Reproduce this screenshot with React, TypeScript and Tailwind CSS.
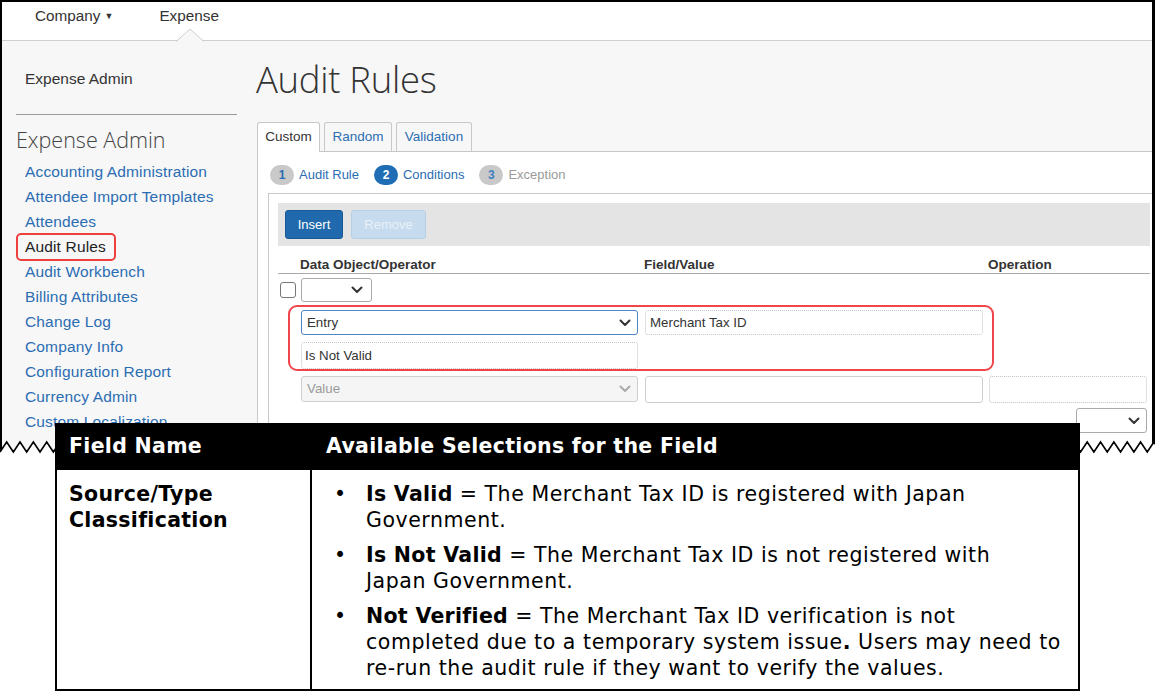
import React from 'react';

const sideLinks = [
  'Accounting Administration',
  'Attendee Import Templates',
  'Attendees',
  'Audit Rules',
  'Audit Workbench',
  'Billing Attributes',
  'Change Log',
  'Company Info',
  'Configuration Report',
  'Currency Admin',
  'Custom Localization',
];

function Chevron({ color = '#333' }: { color?: string }) {
  return (
    <svg width="12" height="8" viewBox="0 0 12 8" className="shrink-0">
      <path d="M1.5 1.5 L6 6 L10.5 1.5" fill="none" stroke={color} strokeWidth="2" strokeLinecap="round" strokeLinejoin="round" />
    </svg>
  );
}

function Zigzag() {
  // teeth along the torn bottom edge of the screenshot
  const pts: string[] = [];
  for (let i = 0; i <= 175; i++) {
    pts.push(`${(i * 6.67).toFixed(2)},${i % 2 ? 4 : 14}`);
  }
  const line = pts.join(' ');
  return (
    <svg className="absolute left-0 top-[438px]" width="1155" height="24" viewBox="0 0 1155 24">
      <polygon points={`0,14 ${line} 1155,24 0,24`} fill="#ffffff" />
      <polyline points={line} fill="none" stroke="#000" strokeWidth="1.6" />
    </svg>
  );
}

export default function App() {
  return (
    <div className="relative w-[1155px] h-[692px] bg-white overflow-hidden font-['Liberation_Sans',Arial,sans-serif]">
      {/* Screenshot area */}
      <div className="h-[458px] border-l-2 border-t-2 border-r-[3px] border-black bg-[#f7f7f7] overflow-hidden">
        {/* Top nav */}
        <div className="relative h-[39px] bg-white border-b border-[#cfcfcf] flex items-start text-[15.3px] text-[#333]">
          <div className="ml-[33px] mt-[3px] flex items-center gap-[4px]">
            Company
            <span className="text-[9px] mt-[1px]">▼</span>
          </div>
          <div className="ml-[46px] mt-[3px]">Expense</div>
          <svg className="absolute left-[174px] top-[26px]" width="28" height="14" viewBox="0 0 28 14">
            <polygon points="0,14 14,1 28,14" fill="#f7f7f7" />
            <polyline points="0,13.5 14,1 28,13.5" fill="none" stroke="#cfcfcf" strokeWidth="1" />
          </svg>
        </div>

        <div className="flex">
          {/* Sidebar */}
          <div className="w-[254px] shrink-0">
            <div className="ml-[23px] mt-[29px] text-[15.5px] text-[#333] leading-[18px]">Expense Admin</div>
            <div className="ml-[14px] mt-[26px] w-[221px] border-t border-[#9a9a9a]" />
            <div className="ml-[14px] mt-[12px] text-[21.5px] font-light text-[#444] leading-[26px] font-['Open_Sans',sans-serif]">Expense Admin</div>
            <div className="mt-[6px] text-[15.5px] leading-[25px] tracking-[0.15px]">
              {sideLinks.map((l) =>
                l === 'Audit Rules' ? (
                  <div key={l} className="ml-[14px] w-[100px] h-[28px] -my-[1.5px] pl-[7px] border-2 border-[#ef3f3f] rounded-[5px] text-[#222] leading-[24px]">
                    {l}
                  </div>
                ) : (
                  <div key={l} className="ml-[23px] text-[#2b6db3]">{l}</div>
                )
              )}
            </div>
          </div>

          {/* Main */}
          <div className="flex-1 min-w-0">
            <div className="mt-[18px] text-[36.5px] font-light text-[#333] leading-[40px] font-['Open_Sans',sans-serif] tracking-[-0.3px]">
              Audit Rules
            </div>
            {/* Tabs */}
            <div className="mt-[23px] ml-[1px] flex gap-[4px] text-[13.5px] h-[29px] items-end">
              <div className="w-[63px] h-[30px] bg-white border border-b-0 border-[#c8c8c8] rounded-t-[3px] flex items-center justify-center text-[#333] relative top-[1px] z-10">Custom</div>
              <div className="w-[68px] h-[29px] bg-[#f7f7f7] border border-b-0 border-[#c8c8c8] rounded-t-[3px] flex items-center justify-center text-[#2b6db3]">Random</div>
              <div className="w-[76px] h-[29px] bg-[#f7f7f7] border border-b-0 border-[#c8c8c8] rounded-t-[3px] flex items-center justify-center text-[#2b6db3]">Validation</div>
            </div>
            {/* Tab panel */}
            <div className="ml-[1px] bg-white border-l border-t border-[#c8c8c8] h-[400px]">
              {/* Steps */}
              <div className="flex items-center h-[41px] pl-[12px] text-[13px] pt-[5px]">
                <div className="w-[24px] h-[20px] rounded-full bg-[#c9c9c9] flex items-center justify-center text-[#2b6db3] font-bold text-[12px]">1</div>
                <div className="ml-[5px] text-[#2b6db3]">Audit Rule</div>
                <div className="ml-[15px] w-[24px] h-[20px] rounded-full bg-[#1f6db5] flex items-center justify-center text-white font-bold text-[12px]">2</div>
                <div className="ml-[5px] text-[#2b6db3]">Conditions</div>
                <div className="ml-[15px] w-[24px] h-[20px] rounded-full bg-[#c9c9c9] flex items-center justify-center text-[#3f7fc0] font-bold text-[12px]">3</div>
                <div className="ml-[5px] text-[#9a9a9a]">Exception</div>
              </div>
              {/* Conditions box */}
              <div className="ml-[10px] w-[900px] border-l border-t border-[#c8c8c8] pl-[9px] pt-[9px] h-[300px]">
                <div className="w-[872px] h-[43px] bg-[#e3e4e3] flex items-center pl-[7px] gap-[8px] text-[13px]">
                  <div className="w-[58px] h-[29px] rounded-[3px] bg-[#1f69ac] border border-[#185a95] text-white flex items-center justify-center">Insert</div>
                  <div className="w-[75px] h-[29px] rounded-[3px] bg-[#c6dbee] border border-[#b5cfe7] text-[#e9f1f9] flex items-center justify-center">Remove</div>
                </div>
                <div className="w-[872px] h-[28px] border-b border-[#a9a9a9] flex items-end text-[13.5px] leading-[16px] font-bold text-[#333]">
                  <div className="ml-[22px] w-[344px]">Data Object/Operator</div>
                  <div className="w-[344px]">Field/Value</div>
                  <div>Operation</div>
                </div>
                {/* Row: empty select */}
                <div className="flex items-center mt-[4px]">
                  <div className="ml-[2px] w-[16px] h-[16px] border border-[#777] rounded-[3px] bg-white" />
                  <div className="ml-[5px] w-[71px] h-[24px] border border-[#aaa] rounded-[3px] bg-white flex items-center justify-end pr-[8px]">
                    <Chevron />
                  </div>
                </div>
                {/* Highlighted rows */}
                <div className="ml-[10px] mt-[3px] w-[706px] h-[66px] border-2 border-[#f0454a] rounded-[9px] pl-[11px] pt-[3px] text-[13.3px] text-[#333]">
                  <div className="flex">
                    <div className="w-[337px] h-[25px] border-[1.5px] border-[#4d86c4] rounded-[3px] bg-white flex items-center justify-between pl-[5px] pr-[6px]">
                      Entry
                      <Chevron />
                    </div>
                    <div className="ml-[7px] w-[338px] h-[25px] border border-dotted border-[#c4c4c4] rounded-[3px] bg-white flex items-center pl-[4px]">
                      Merchant Tax ID
                    </div>
                  </div>
                  <div className="mt-[7px] w-[337px] h-[27px] border border-dotted border-[#c4c4c4] rounded-[3px] bg-white flex items-center pl-[3px]">
                    Is Not Valid
                  </div>
                </div>
                {/* Value row */}
                <div className="ml-[23px] mt-[5px] flex text-[13.3px]">
                  <div className="w-[337px] h-[26px] border border-[#cfcfcf] rounded-[3px] bg-[#f5f5f5] flex items-center justify-between pl-[5px] pr-[6px] text-[#9a9a9a]">
                    Value
                    <Chevron color="#aaa" />
                  </div>
                  <div className="ml-[7px] w-[338px] h-[27px] border border-[#cfcfcf] rounded-[3px] bg-white" />
                  <div className="ml-[6px] w-[158px] h-[27px] border border-dotted border-[#c4c4c4] rounded-[3px] bg-white" />
                </div>
                <div className="ml-[798px] mt-[5px] w-[71px] h-[25px] border border-[#aaa] rounded-[3px] bg-white flex items-center justify-end pr-[6px]">
                  <Chevron />
                </div>
              </div>
            </div>
          </div>
        </div>
      </div>

      <Zigzag />

      {/* Overlay reference table */}
      <div className="absolute left-[55px] top-[423px] w-[1025px] font-['DejaVu_Sans',Verdana,sans-serif] text-[20.5px] tracking-[0.55px] text-black">
        <div className="h-[47px] bg-black text-white font-bold tracking-[0.3px] flex items-center">
          <div className="w-[257px] pl-[14px]">Field Name</div>
          <div className="pl-[14px]">Available Selections for the Field</div>
        </div>
        <div className="h-[221px] bg-white border-2 border-t-0 border-black flex leading-[26px]">
          <div className="w-[255px] border-r-2 border-black pl-[12px] pt-[11px] font-bold tracking-[0.3px]">
            Source/Type
            <br />
            Classification
          </div>
          <ul className="flex-1 pt-[11px] flex flex-col gap-[9px] whitespace-nowrap">
            <li className="flex">
              <span className="w-[54px] shrink-0 pl-[22px]">•</span>
              <span>
                <b className="tracking-[0.3px]">Is Valid</b> = The Merchant Tax ID is registered with Japan
                <br />
                Government.
              </span>
            </li>
            <li className="flex">
              <span className="w-[54px] shrink-0 pl-[22px]">•</span>
              <span>
                <b className="tracking-[0.3px]">Is Not Valid</b> = The Merchant Tax ID is not registered with
                <br />
                Japan Government.
              </span>
            </li>
            <li className="flex">
              <span className="w-[54px] shrink-0 pl-[22px]">•</span>
              <span>
                <b className="tracking-[0.3px]">Not Verified</b> = The Merchant Tax ID verification is not
                <br />
                completed due to a temporary system issue<b>.</b> Users may need to
                <br />
                re-run the audit rule if they want to verify the values.
              </span>
            </li>
          </ul>
        </div>
      </div>
    </div>
  );
}
